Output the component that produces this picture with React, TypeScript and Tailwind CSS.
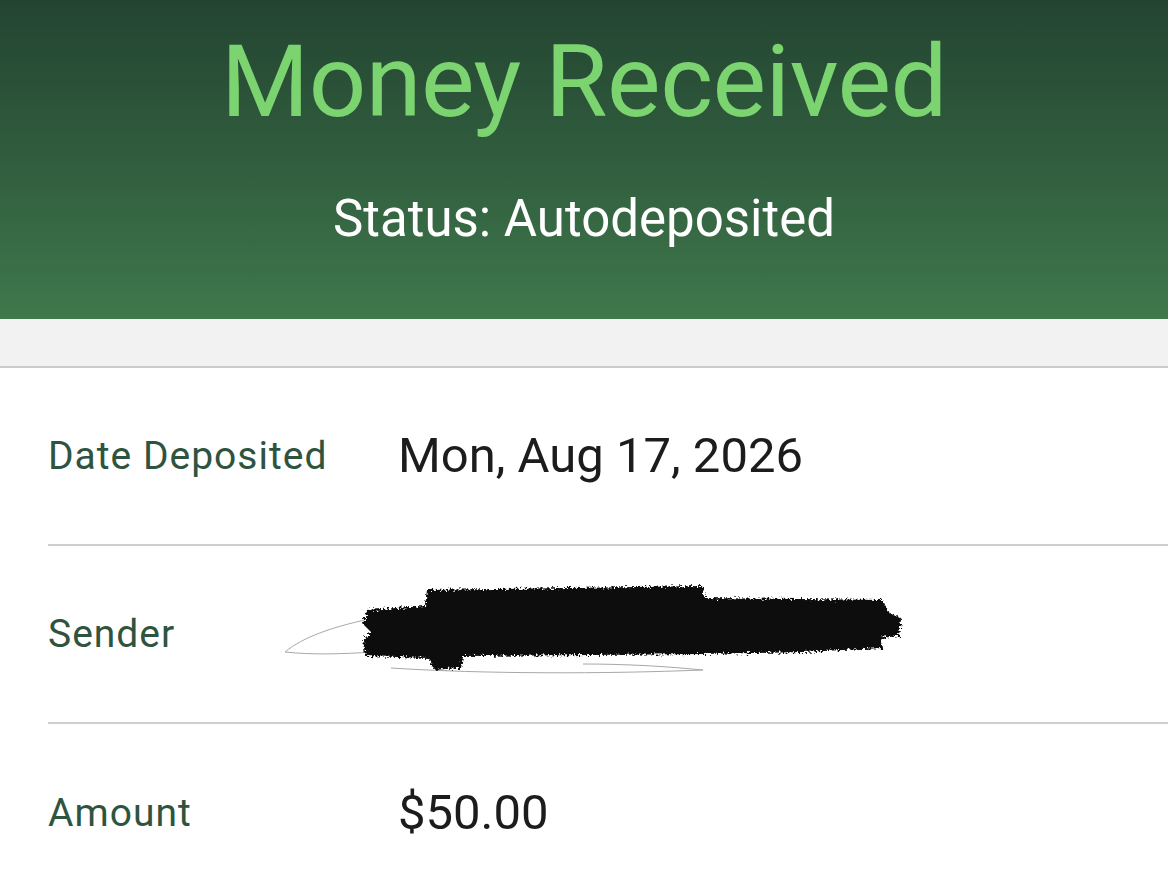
import React from "react";

const rows = [
  { label: "Date Deposited", value: "Mon, Aug 17, 2026" },
  { label: "Sender", value: null },
  { label: "Amount", value: "$50.00" },
];

function Redaction() {
  return (
    <svg width="640" height="100" viewBox="0 0 640 100" className="block">
      <defs>
        <filter id="rough" x="-5%" y="-20%" width="110%" height="140%">
          <feTurbulence type="fractalNoise" baseFrequency="0.45" numOctaves="2" seed="3" />
          <feDisplacementMap in="SourceGraphic" scale="8" />
        </filter>
      </defs>
      <path
        d="M2 70 C 20 55, 50 45, 82 38 M2 70 C 30 73, 60 72, 90 70 M108 86 C 200 92, 320 92, 420 88 M420 88 C 380 84, 340 82, 300 82"
        fill="none"
        stroke="#a8a8a8"
        strokeWidth="1"
      />
      <g filter="url(#rough)" fill="#0a0a0a">
        <path d="M144 8 L420 4 L421 16 L600 18 L605 30 L618 36 L616 54 L598 56 L600 66 L520 70 L420 72 L180 74 L178 86 L150 88 L146 76 L82 74 L80 58 L88 50 L80 42 L84 28 L142 24 Z" />
      </g>
    </svg>
  );
}

export default function App() {
  return (
    <div className="w-full min-h-screen bg-white" style={{ fontFamily: "Roboto, 'Noto Sans', sans-serif" }}>
      <div className="h-[319px] bg-gradient-to-b from-[#234431] to-[#3f784b] flex flex-col items-center">
        <h1 className="mt-[24px] text-[101px] leading-[1.15] text-[#7bd46f] tracking-[-0.5px]">Money Received</h1>
        <p className="mt-[53px] text-[51px] leading-none text-white">Status: Autodeposited</p>
      </div>
      <div className="h-[49px] bg-[#f2f2f2] border-b-2 border-[#cbcbcb]" />
      <div className="pl-[48px]">
        {rows.map((r, i) => (
          <div
            key={r.label}
            className={`h-[178px] flex items-center ${i < rows.length - 1 ? "border-b-2 border-[#cfcfcf]" : ""}`}
          >
            <div className="w-[350px] text-[39px] tracking-[1px] text-[#2e5440]">{r.label}</div>
            {r.value ? (
              <div className="text-[49px] text-[#1c1c1c]">{r.value}</div>
            ) : (
              <div className="-ml-[115px] -mt-[4px]">
                <Redaction />
              </div>
            )}
          </div>
        ))}
      </div>
    </div>
  );
}
